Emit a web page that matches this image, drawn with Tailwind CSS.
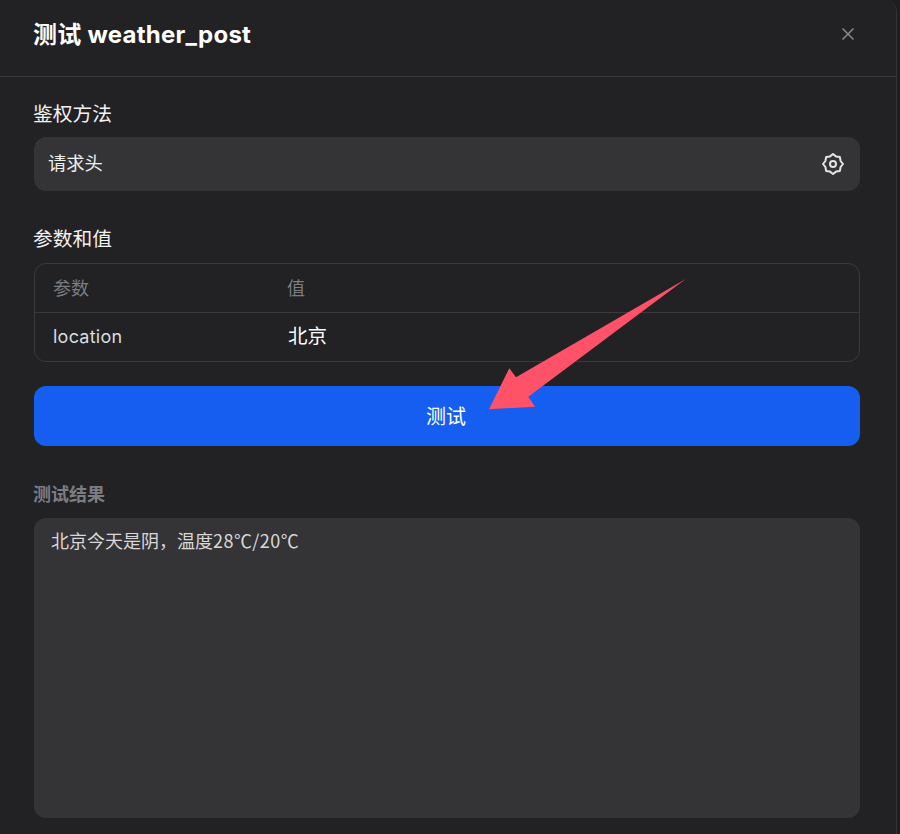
<!DOCTYPE html>
<html lang="zh">
<head>
  <meta charset="UTF-8">
  <title>测试 weather_post</title>
  <script src="https://cdn.jsdelivr.net/npm/@tailwindcss/browser@4"></script>
</head>
<body class="bg-[#1e1e20] h-[834px] overflow-hidden font-['Inter','Noto_Sans_CJK_SC',sans-serif]">
  <div class="relative w-[897px] h-[834px] bg-[#222224] border-r border-[#333336] rounded-tr-xl overflow-hidden">
    <header class="h-[77px] border-b border-[#3a3a3d] pl-[33px] pr-[43px] flex items-center justify-between">
      <h1 class="text-[24px] leading-[32px] font-bold text-white -mt-[7px] tracking-[0.25px]">测试 weather_post</h1>
      <svg class="w-4 h-4 text-[#85858c] -mt-[9px] -mr-[3px]" viewBox="0 0 16 16" fill="none" stroke="currentColor" stroke-width="1.6"><path d="M2.5 2.5l11 11M13.5 2.5l-11 11"/></svg>
    </header>

    <section class="pl-[34px] pr-[36px] pt-[24px]">
      <div class="text-[19.75px] leading-[26px] text-[#f2f2f3] -ml-px">鉴权方法</div>
      <div class="mt-[10px] h-[54px] rounded-xl bg-[#343436] pl-[15px] pr-[16px] flex items-center justify-between">
        <span class="text-[18.3px] text-[#f0f0f1] -ml-px">请求头</span>
        <svg class="w-[22px] h-[22px] text-[#e4e4e6]" viewBox="0 0 22 22" fill="none" stroke="currentColor" stroke-width="2" stroke-linejoin="round"><path d="M11 1L14 3.4 17.9 4.1 18.6 8 21 11 18.6 14 17.9 17.9 14 18.6 11 21 8 18.6 4.1 17.9 3.4 14 1 11 3.4 8 4.1 4.1 8 3.4z"/><circle cx="11" cy="11" r="3"/></svg>
      </div>

      <div class="mt-[35px] text-[19.75px] leading-[26px] text-[#f2f2f3] -ml-px">参数和值</div>
      <div class="mt-[11px] rounded-xl border border-[#3a3a3d] text-[18px]">
        <div class="h-[49px] flex items-center border-b border-[#3a3a3d] text-[#7c7c83]">
          <span class="w-[253px] pl-[18px]">参数</span>
          <span class="-ml-px">值</span>
        </div>
        <div class="h-[48px] flex items-center">
          <span class="w-[254px] pl-[18px] pb-[2px] text-[#dcdcde] tracking-[0.25px]">location</span>
          <span class="text-white text-[19.5px] -ml-px">北京</span>
        </div>
      </div>

      <button class="mt-[24px] w-full h-[60px] pt-[2px] pr-[2px] rounded-xl bg-[#155eef] text-white text-[20px] flex items-center justify-center">测试</button>

      <div class="mt-[37px] text-[18px] leading-[24px] font-bold text-[#7c7c83] -ml-px">测试结果</div>
      <div class="mt-[11px] h-[300px] rounded-xl bg-[#343436] px-[17px] pt-[8px] text-[18px] leading-[28px] text-[#d8d8da] font-['Noto_Sans_CJK_SC',sans-serif]">北京今天是阴，温度<span class="tracking-[0.45px]">28℃/20℃</span></div>
    </section>

    <svg class="absolute left-0 top-0 pointer-events-none" width="897" height="834" viewBox="0 0 897 834"><polygon fill="#ff5269" points="685.7,279 516,377.3 509.3,368.3 489,409.3 535,406.7 528.3,396.7"/></svg>
  </div>
</body>
</html>
